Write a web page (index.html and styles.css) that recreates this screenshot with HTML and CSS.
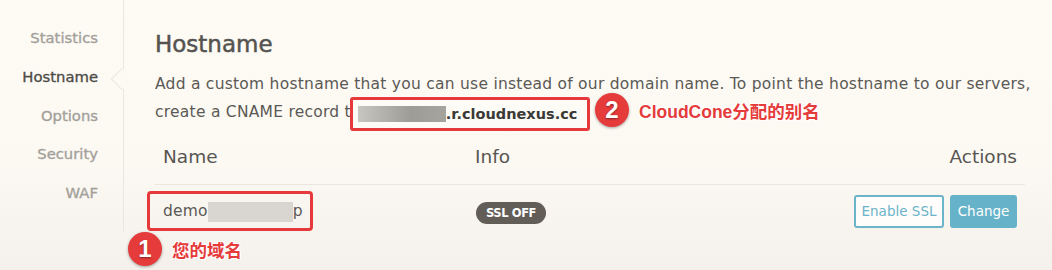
FILE: index.html
```html
<!DOCTYPE html>
<html>
<head>
<meta charset="utf-8">
<link rel="stylesheet" href="styles.css">
</head>
<body>
<div class="page">
  <nav class="sidebar">
    <div class="nav-item">Statistics</div>
    <div class="nav-item active">Hostname</div>
    <div class="nav-item">Options</div>
    <div class="nav-item">Security</div>
    <div class="nav-item">WAF</div>
  </nav>
  <main class="main">
    <h1 class="title">Hostname</h1>
    <p class="desc">Add a custom hostname that you can use instead of our domain name. To point the hostname to our servers,<br>create a CNAME record to <span class="cname-box"><span class="blur blur-dark"></span>.r.cloudnexus.cc</span></p>
    <div class="table">
      <div class="thead">
        <div class="col-name">Name</div>
        <div class="col-info">Info</div>
        <div class="col-actions">Actions</div>
      </div>
      <div class="row">
        <div class="col-name"><span class="name-box">demo<span class="blur blur-light"></span>p</span></div>
        <div class="col-info"><span class="badge">SSL OFF</span></div>
        <div class="col-actions">
          <button class="btn btn-outline">Enable SSL</button>
          <button class="btn btn-solid">Change</button>
        </div>
      </div>
    </div>
  </main>
</div>
<div class="note note-1"><span class="num">1</span><span class="note-text">您的域名</span></div>
<div class="note note-2"><span class="num">2</span><span class="note-text">CloudCone分配的别名</span></div>
</body>
</html>
```
FILE: styles.css
```css
html, body {
  margin: 0;
  padding: 0;
}
body {
  width: 1052px;
  height: 270px;
  overflow: hidden;
  background: linear-gradient(#fefbf5 0%, #fcf9f3 60%, #f4f1ec 100%);
  font-family: "DejaVu Sans", "Noto Sans CJK SC", sans-serif;
  color: #555;
  position: relative;
}
.page {
  display: flex;
  height: 232px;
}
.sidebar {
  width: 124px;
  border-right: 1px solid #ebe7e0;
  padding-top: 29px;
  box-sizing: border-box;
  flex: none;
}
.nav-item {
  text-align: right;
  padding-right: 25px;
  height: 38.75px;
  font-size: 14.8px;
  color: #a3a09a;
  -webkit-text-stroke: 0.35px #a3a09a;
  position: relative;
}
.nav-item.active {
  color: #4e4c48;
  -webkit-text-stroke: 0.35px #4e4c48;
}
.nav-item.active::after {
  content: "";
  position: absolute;
  right: -7px;
  top: 3px;
  width: 15px;
  height: 15px;
  background: #fdfaf4;
  border-left: 1px solid #ebe7e0;
  border-bottom: 1px solid #ebe7e0;
  transform: rotate(45deg);
  -webkit-text-stroke: 0;
}
.main {
  flex: 1;
  min-width: 0;
  padding: 29px 27px 0 31px;
}
.title {
  margin: 0;
  font-size: 23px;
  font-weight: normal;
  color: #555350;
  -webkit-text-stroke: 0.5px #555350;
  line-height: 30px;
}
.desc {
  margin: 11px 0 0;
  font-size: 15.5px;
  line-height: 28px;
  color: #5b5955;
  letter-spacing: 0.25px;
  white-space: nowrap;
}
.cname-box {
  display: inline-block;
  border: 3px solid #e5393b;
  border-radius: 3px;
  margin: -3px 0 -3px -16px;
  padding: 0 10px 0 5px;
  line-height: 28px;
  font-weight: bold;
  font-size: 14.5px;
  letter-spacing: 0;
  color: #3a3936;
  background: #fdfbf6;
  position: relative;
  top: 2px;
}
.blur {
  display: inline-block;
  vertical-align: middle;
  height: 16px;
}
.blur-dark {
  width: 88px;
  background: linear-gradient(90deg, #c8c6c0, #9e9c96 60%, #a6a49f);
  position: relative;
  top: -1px;
}
.blur-light {
  width: 85px;
  height: 20px;
  background: #d9d6d2;
}
.table {
  margin-top: 15px;
}
.thead, .row {
  display: flex;
  align-items: center;
}
.thead {
  height: 44px;
  box-sizing: border-box;
  padding: 5px 0 17px;
  border-bottom: 1px solid #ebe7e0;
  font-size: 18.5px;
  line-height: 22px;
  color: #585652;
}
.row {
  height: 56px;
}
.col-name {
  width: 312px;
  padding-left: 8px;
}
.col-info {
  flex: 1;
}
.col-actions {
  text-align: right;
  padding-right: 8px;
  display: flex;
  gap: 6px;
  justify-content: flex-end;
}
.thead .col-actions {
  display: block;
}
.name-box {
  display: inline-block;
  border: 3px solid #e5393b;
  border-radius: 4px;
  margin-left: -16px;
  padding: 0 7px 0 13px;
  height: 34px;
  line-height: 34px;
  font-size: 15.5px;
  letter-spacing: 0.2px;
  color: #5b5955;
  position: relative;
  top: -2px;
}
.badge {
  display: inline-block;
  background: #625d57;
  color: #fff;
  border-radius: 11px;
  font-size: 11.5px;
  font-weight: bold;
  height: 22px;
  line-height: 22px;
  padding: 0 10px;
  letter-spacing: -0.4px;
  margin-left: 1px;
}
.btn {
  font-family: "DejaVu Sans", sans-serif;
  font-size: 13.5px;
  height: 33px;
  border-radius: 3px;
  padding: 0 4px;
  cursor: pointer;
  position: relative;
  top: -2px;
}
.btn-outline {
  background: #fefdfb;
  border: 2px solid #6bb4c9;
  color: #6bb4c9;
  width: 90px;
}
.btn-solid {
  background: #66b3c9;
  border: 2px solid #66b3c9;
  color: #fff;
  width: 67px;
}
.note {
  position: absolute;
  display: flex;
  align-items: center;
  gap: 10px;
}
.note-1 {
  left: 128px;
  top: 232px;
}
.note-2 {
  left: 595px;
  top: 93px;
}
.num {
  width: 34px;
  height: 34px;
  border-radius: 50%;
  background: #e53b3b;
  color: #fff;
  font-family: "Liberation Sans", sans-serif;
  font-weight: bold;
  font-size: 24px;
  display: flex;
  align-items: center;
  justify-content: center;
  box-shadow: 0 1px 3px rgba(0,0,0,0.35);
  text-shadow: 0 1px 2px rgba(0,0,0,0.4);
}
.note-text {
  color: #e53b3b;
  font-family: "Liberation Sans", "Noto Sans CJK SC", sans-serif;
  font-weight: bold;
  font-size: 17.5px;
  text-shadow: -1px -1px 0 #fff, 1px -1px 0 #fff, -1px 1px 0 #fff, 1px 1px 0 #fff, 0 0 2px #fff;
}
```
